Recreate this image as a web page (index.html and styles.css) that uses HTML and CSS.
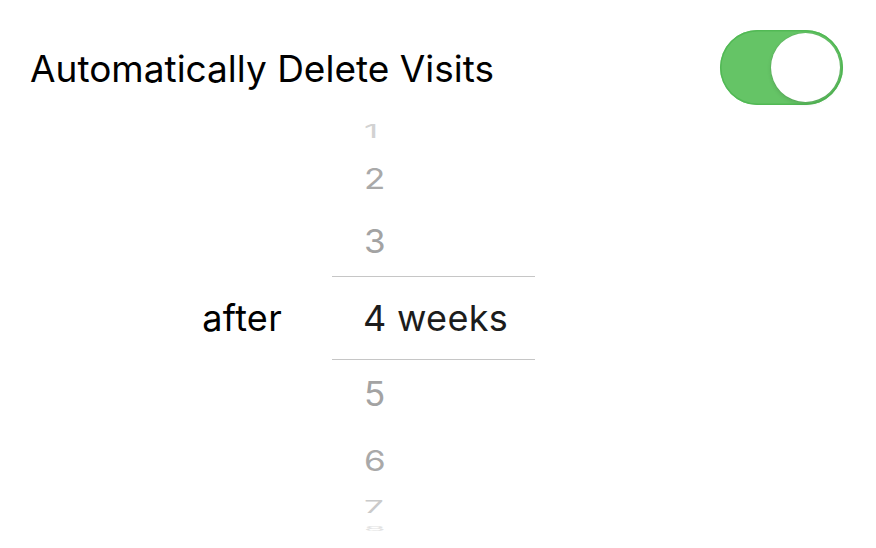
FILE: index.html
```html
<!DOCTYPE html>
<html lang="en">
<head>
<meta charset="utf-8">
<title>Automatically Delete Visits</title>
<link rel="stylesheet" href="styles.css">
</head>
<body>
<div class="screen">
  <div class="setting-row">
    <span class="setting-title">Automatically Delete Visits</span>
    <div class="switch is-on" role="switch" aria-checked="true">
      <div class="switch-knob"></div>
    </div>
  </div>
  <div class="picker">
    <div class="picker-label">after</div>
    <div class="wheel-item r1">1</div>
    <div class="wheel-item r2">2</div>
    <div class="wheel-item r3">3</div>
    <div class="wheel-item r4 selected">4 weeks</div>
    <div class="wheel-item r5">5</div>
    <div class="wheel-item r6">6</div>
    <div class="wheel-item r7">7</div>
    <div class="wheel-item r8">8</div>
  </div>
</div>
</body>
</html>
```

FILE: styles.css
```css
html, body {
  margin: 0;
  padding: 0;
  background: #ffffff;
}

.screen {
  width: 876px;
  height: 548px;
  overflow: hidden;
  font-family: Inter, "Liberation Sans", Arial, sans-serif;
  color: #000;
}

.setting-row {
  height: 112px;
  display: flex;
  align-items: center;
  justify-content: space-between;
  padding: 23px 33px 0 30px;
  box-sizing: border-box;
}

.setting-title {
  font-size: 37px;
  color: #000;
  margin-top: 1px;
}

.switch {
  width: 123px;
  height: 75px;
  border-radius: 38px;
  background: #65c466;
  box-shadow: inset 0 0 0 1.5px #52b955;
  box-sizing: border-box;
  padding: 3px;
  display: flex;
  justify-content: flex-end;
}

.switch-knob {
  width: 69px;
  height: 69px;
  border-radius: 50%;
  background: #fff;
  box-shadow: 0 0 0 0.5px rgba(0,0,0,0.08), 0 2px 4px rgba(0,0,0,0.12);
}

.picker {
  display: grid;
  grid-template-columns: 283px 203px;
  grid-template-rows: 38px 56px 70px 84px 68px 64px 28px 18px;
  column-gap: 49px;
}

.picker-label {
  grid-column: 1;
  grid-row: 4;
  font-size: 36px;
  letter-spacing: 0.3px;
  display: flex;
  align-items: center;
  justify-content: flex-end;
  color: #000;
  padding-right: 1px;
}

.wheel-item {
  grid-column: 2;
  display: flex;
  align-items: center;
  padding-left: 32px;
  font-size: 35px;
  color: #a3a3a3;
  box-sizing: border-box;
}

.r1 { grid-row: 1; color: #d2d2d2; transform: scaleY(0.55); }
.r2 { grid-row: 2; color: #a9a9a9; transform: scaleY(0.82); }
.r3 { grid-row: 3; color: #a3a3a3; transform: scaleY(0.94); }
.r4 { grid-row: 4; }
.r5 { grid-row: 5; color: #a3a3a3; transform: scaleY(0.96); }
.r6 { grid-row: 6; color: #a9a9a9; transform: scaleY(0.82); }
.r7 { grid-row: 7; color: #cacaca; transform: scaleY(0.5); }
.r8 { grid-row: 8; color: #e2e2e2; transform: scaleY(0.18); }

.wheel-item.selected {
  color: #1c1c1c;
  font-size: 36px;
  letter-spacing: 0.3px;
  border-top: 1px solid #c6c6c6;
  border-bottom: 1px solid #c6c6c6;
  padding-left: 31px;
}
```
